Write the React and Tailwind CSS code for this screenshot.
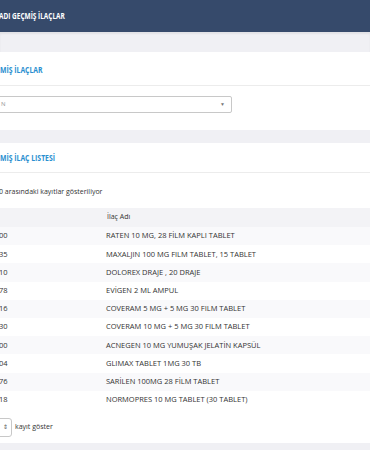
const rows = [
  ["00", "RATEN 10 MG, 28 FİLM KAPLI TABLET"],
  ["35", "MAXALJIN 100 MG FILM TABLET, 15 TABLET"],
  ["10", "DOLOREX DRAJE , 20 DRAJE"],
  ["78", "EVİGEN 2 ML AMPUL"],
  ["16", "COVERAM 5 MG + 5 MG 30 FILM TABLET"],
  ["30", "COVERAM 10 MG + 5 MG 30 FILM TABLET"],
  ["00", "ACNEGEN 10 MG YUMUŞAK JELATİN KAPSÜL"],
  ["04", "GLIMAX TABLET 1MG 30 TB"],
  ["76", "SARİLEN 100MG 28 FİLM TABLET"],
  ["18", "NORMOPRES 10 MG TABLET (30 TABLET)"],
];

// condensed look for the headings
const titleFont =
  "inline-block origin-left scale-x-[0.72] font-['Open_Sans',sans-serif] font-bold";

export default function App() {
  return (
    <div className="w-[370px] h-[450px] overflow-hidden bg-[#f0f0f4] font-['Open_Sans',sans-serif] text-[#444]">
      {/* top bar */}
      <div className="h-[32px] bg-[#364a6b] flex items-center text-white text-[9px]">
        <span className={`${titleFont} -ml-[1px]`}>ADI GEÇMİŞ İLAÇLAR</span>
      </div>
      <div className="h-[20px] shadow-[inset_0_2px_2px_rgba(0,0,0,0.06)]" />

      {/* panel 1 */}
      <div className="bg-white h-[78px]">
        <div className="h-[34px] border-b border-[#ececec] flex items-center pt-[4px] text-[9.5px] text-[#2a8fd0]">
          <span className={titleFont}>MİŞ İLAÇLAR</span>
        </div>
        <div className="mt-[10px] -ml-[4px] w-[236px] h-[17px] border border-[#c8c8c8] rounded-[2px] flex items-center justify-between pl-[4px] pr-[6px] text-[6px] text-[#999]">
          <span>N</span>
          <span className="text-[5px] text-[#777]">▼</span>
        </div>
      </div>
      <div className="h-[13px]" />

      {/* panel 2 */}
      <div className="bg-white h-[300px] flex flex-col">
        <div className="h-[30px] border-b border-[#ececec] flex items-center pt-[2px] text-[9.5px] text-[#2a8fd0]">
          <span className={titleFont}>MİŞ İLAÇ LISTESİ</span>
        </div>
        <div className="h-[35px] flex items-center pt-[4px] text-[7px] text-[#333]">
          <span className="-ml-[1px]">0 arasındaki kayıtlar gösteriliyor</span>
        </div>
        <div className="h-[19px] bg-[#f3f3f6] flex items-center text-[7px] text-[#333]">
          <span className="w-[107px]" />
          <span>İlaç Adı</span>
        </div>
        {rows.map(([id, name], i) => (
          <div
            key={i}
            className={`h-[18.2px] flex items-center text-[7.5px] text-[#333] ${i % 2 === 0 ? "bg-[#f9f9fb]" : "bg-white"}`}
          >
            <span className="w-[107px] -ml-[1px]">{id}</span>
            <span>{name}</span>
          </div>
        ))}
        <div className="mt-[9px] flex items-center gap-[3px] text-[7px] text-[#333]">
          <div className="-ml-[4px] w-[16px] h-[19px] border border-[#c8c8c8] rounded-[3px] flex items-center justify-end pr-[3px] text-[6px] text-[#555] leading-none">
            ⇕
          </div>
          <span>kayıt göster</span>
        </div>
      </div>
    </div>
  );
}
